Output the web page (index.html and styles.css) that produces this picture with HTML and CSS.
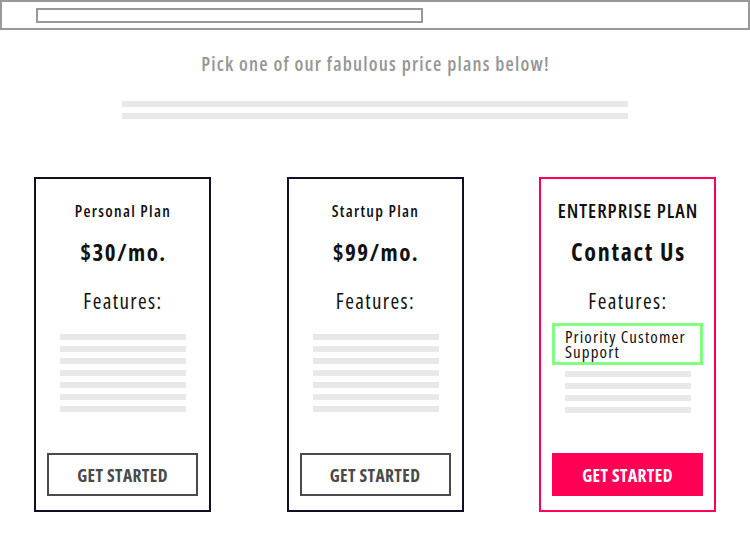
FILE: index.html
```html
<!DOCTYPE html>
<html>
<head>
<meta charset="utf-8">
<link rel="stylesheet" href="styles.css">
</head>
<body>
<header class="topbar"><div class="search"></div></header>
<h1 class="intro">Pick one of our fabulous price plans below!</h1>
<div class="intro-lines"><span class="bar"></span><span class="bar"></span></div>
<main class="plans">
  <section class="card">
    <h2 class="plan-name">Personal Plan</h2>
    <div class="price">$30/mo.</div>
    <h3 class="features">Features:</h3>
    <div class="lines">
      <span class="line"></span><span class="line"></span><span class="line"></span><span class="line"></span><span class="line"></span><span class="line"></span><span class="line"></span>
    </div>
    <button class="btn">GET STARTED</button>
  </section>
  <section class="card">
    <h2 class="plan-name">Startup Plan</h2>
    <div class="price">$99/mo.</div>
    <h3 class="features">Features:</h3>
    <div class="lines">
      <span class="line"></span><span class="line"></span><span class="line"></span><span class="line"></span><span class="line"></span><span class="line"></span><span class="line"></span>
    </div>
    <button class="btn">GET STARTED</button>
  </section>
  <section class="card card-hot">
    <h2 class="plan-name plan-upper">ENTERPRISE PLAN</h2>
    <div class="price price-text">Contact Us</div>
    <h3 class="features">Features:</h3>
    <div class="highlight">Priority Customer Support</div>
    <div class="lines lines-short">
      <span class="line"></span><span class="line"></span><span class="line"></span><span class="line"></span>
    </div>
    <button class="btn btn-hot">GET STARTED</button>
  </section>
</main>
</body>
</html>
```
FILE: styles.css
```css
* { box-sizing: border-box; }
body {
  margin: 0;
  width: 750px;
  height: 550px;
  background: #fff;
  font-family: "Open Sans", "DejaVu Sans", sans-serif;
  font-stretch: condensed;
  color: #111;
}
.topbar {
  height: 30px;
  border: 2px solid #999;
  padding: 6px 0 0 34px;
}
.search {
  width: 387px;
  height: 15px;
  border: 2px solid #999;
}
.intro {
  margin: 21px 0 0;
  padding-left: 1px;
  text-align: center;
  font-size: 19px;
  line-height: 26px;
  font-weight: 600;
  letter-spacing: 1.2px;
  color: #969696;
}
.intro-lines {
  width: 506px;
  margin: 24px auto 0;
  display: flex;
  flex-direction: column;
  gap: 6px;
}
.bar { display: block; height: 6px; background: #e8e8e8; }
.plans {
  display: flex;
  justify-content: center;
  gap: 75.5px;
  margin-top: 58px;
}
.card {
  width: 177px;
  height: 335px;
  border: 2px solid #0f1020;
  display: flex;
  flex-direction: column;
  align-items: stretch;
  padding: 22px 11px 14px;
  text-align: center;
}
.card-hot { border-color: #ff0055; }
.plan-name {
  margin: 0;
  padding-left: 1px;
  font-size: 16px;
  line-height: 20px;
  font-weight: 600;
  letter-spacing: 1.3px;
}
.plan-upper {
  font-size: 19.5px;
  letter-spacing: 1px;
}
.price {
  margin-top: 16px;
  padding-left: 2px;
  font-size: 23px;
  line-height: 30px;
  font-weight: 700;
  letter-spacing: 1.5px;
}
.price-text {
  font-size: 24px;
  letter-spacing: 1.7px;
}
.features {
  margin: 21px 0 0;
  padding-left: 1px;
  font-size: 21px;
  line-height: 26px;
  font-weight: 400;
  letter-spacing: 1.4px;
}
.lines {
  margin: 20px 12px 0 13px;
  display: flex;
  flex-direction: column;
  gap: 6px;
}
.lines-short { margin-top: 6px; }
.line { display: block; height: 6px; background: #e8e8e8; }
.highlight {
  margin-top: 9px;
  border: 3px solid #80ff80;
  padding: 3px 10px;
  text-align: left;
  font-size: 17px;
  line-height: 15px;
  font-weight: 500;
  letter-spacing: 1.1px;
}
.btn {
  margin-top: auto;
  height: 43px;
  border: 2px solid #4a4a4a;
  background: #fff;
  color: #4a4a4a;
  font-family: inherit;
  font-stretch: condensed;
  font-size: 17.5px;
  font-weight: 700;
  letter-spacing: 0.4px;
  padding: 0;
}
.btn-hot {
  background: #ff0055;
  border-color: #ff0055;
  color: #fff;
}
```
